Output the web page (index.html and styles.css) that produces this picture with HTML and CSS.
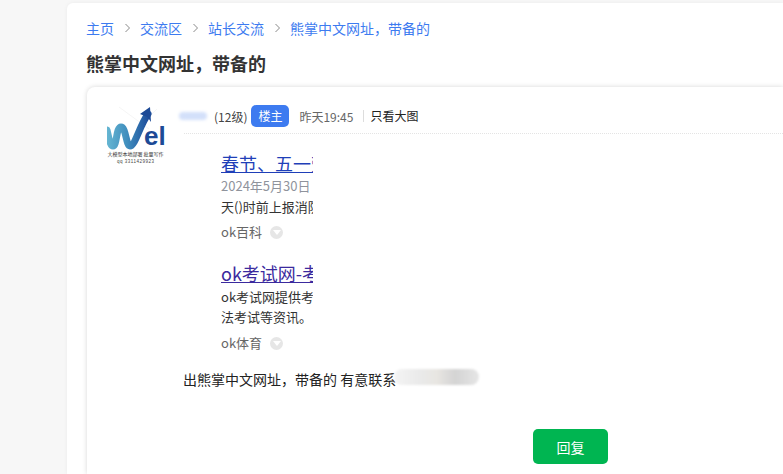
FILE: index.html
```html
<!DOCTYPE html>
<html lang="zh">
<head>
<meta charset="utf-8">
<title>熊掌中文网址，带备的</title>
<link rel="stylesheet" href="styles.css">
</head>
<body>
<main class="panel">
  <nav class="crumbs">
    <a>主页</a><span class="sep"><svg width="7" height="10" viewBox="0 0 7 10"><path d="M1.5 1l4 4-4 4" fill="none" stroke="#8a8a8a" stroke-width="1"/></svg></span>
    <a>交流区</a><span class="sep"><svg width="7" height="10" viewBox="0 0 7 10"><path d="M1.5 1l4 4-4 4" fill="none" stroke="#8a8a8a" stroke-width="1"/></svg></span>
    <a>站长交流</a><span class="sep"><svg width="7" height="10" viewBox="0 0 7 10"><path d="M1.5 1l4 4-4 4" fill="none" stroke="#8a8a8a" stroke-width="1"/></svg></span>
    <a>熊掌中文网址，带备的</a>
  </nav>
  <h1 class="title">熊掌中文网址，带备的</h1>
  <article class="card">
    <div class="avatar">
      <svg width="58" height="60" viewBox="0 0 58 60">
        <defs>
          <linearGradient id="wg" x1="0" y1="0" x2="1" y2="0">
            <stop offset="0" stop-color="#66b6d2"/>
            <stop offset="0.5" stop-color="#3f8dbd"/>
            <stop offset="1" stop-color="#1f4f9c"/>
          </linearGradient>
        </defs>
        <path d="M12 2L42 24M50 4L36 18" stroke="#eeeeee" stroke-width="0.6" fill="none"/>
        <path d="M0 25C2 33 3 41 6 41C10 41 9 22 14 22C19 22 19 41 23 41C28 41 32 22 41 9" fill="none" stroke="url(#wg)" stroke-width="7" stroke-linecap="round"/>
        <path d="M33 9L43 2L44 17L40.500 12Z" fill="#1d4a96"/>
        <text x="37" y="40" class="logo-el">el</text>
        <text x="0.500" y="51" class="logo-zh">大模型本地部署 批量写作</text>
        <text x="10" y="58" class="logo-qq">qq 3311429923</text>
      </svg>
    </div>
    <div class="body">
      <header class="meta">
        <span class="blur-name"></span>
        <span class="level">(12级)</span>
        <span class="badge">楼主</span>
        <span class="time">昨天19:45</span>
        <span class="only">只看大图</span>
      </header>
      <div class="content">
        <section class="snip">
          <a class="snip-title">春节、五一劳</a>
          <p class="snip-date">2024年5月30日</p>
          <p class="snip-text">天()时前上报消防</p>
          <p class="snip-src">ok百科<i class="drop"></i></p>
        </section>
        <section class="snip second">
          <a class="snip-title visited">ok考试网-考</a>
          <p class="snip-text">ok考试网提供考</p>
          <p class="snip-text">法考试等资讯。</p>
          <p class="snip-src">ok体育<i class="drop"></i></p>
        </section>
        <p class="line">出熊掌中文网址，带备的 有意联系<span class="blur-contact"></span></p>
        <div class="actions"><button class="reply">回复</button></div>
      </div>
    </div>
  </article>
</main>
</body>
</html>
```
FILE: styles.css
```css
* { box-sizing: border-box; }
html, body { margin: 0; height: 100%; overflow: hidden; }
body {
  display: flex;
  background: #f7f7f7;
  font-family: "Noto Sans CJK SC", "Liberation Sans", sans-serif;
  color: #333;
  padding: 3px 0 0 67px;
}
.panel {
  display: flex;
  flex-direction: column;
  flex: 1;
  min-width: 0;
  background: #fff;
  padding: 14px 0 0 20px;
  border-radius: 6px 0 0 0;
  box-shadow: 0 0 4px rgba(0,0,0,.05);
}
.crumbs {
  display: flex;
  align-items: center;
  flex: none;
  height: 22px;
  margin-left: -1px;
  font-size: 14px;
  color: #3d7bf0;
}
.sep { display: flex; margin: 0 9px 0 10px; }
.title {
  flex: none;
  margin: 8px 0 0 -1px;
  height: 40px;
  font-size: 18px;
  line-height: 32px;
  font-weight: 700;
  color: #333;
}
.card {
  display: flex;
  flex: 1;
  min-height: 0;
  background: #fff;
  border-radius: 8px 0 0 0;
  box-shadow: 0 0 5px rgba(0,0,0,.16);
  padding: 18px 0 0 20px;
}
.avatar { width: 58px; flex: none; margin-right: 16px; height: 60px; }
.avatar svg { display: block; overflow: hidden; }
.logo-el { font: 700 26px "Liberation Sans", sans-serif; fill: #1d4a96; }
.logo-zh { font: 5px "Noto Sans CJK SC", sans-serif; fill: #333; }
.logo-qq { font: 4.500px "Liberation Sans", sans-serif; fill: #444; letter-spacing: .5px; }
.body { flex: 1; min-width: 0; margin-left: 3px; }
.meta {
  display: flex;
  align-items: center;
  height: 22px;
  font-size: 12px;
}
.blur-name {
  width: 28px;
  height: 8px;
  margin: 0 7px 0 -5px;
  background: #d3e0fa;
  border-radius: 4px;
  filter: blur(1.5px);
}
.level { color: #444; }
.badge {
  width: 38px;
  height: 22px;
  margin-left: 4px;
  line-height: 22px;
  text-align: center;
  color: #fff;
  background: #3d7bf0;
  border-radius: 5px;
}
.time { margin-left: 10px; color: #666; }
.only {
  margin-left: 10px;
  padding-left: 6px;
  line-height: 12px;
  border-left: 1px solid #ddd;
  color: #222;
}
.content {
  border-top: 1px dotted #e4e4e4;
  margin-top: 6px;
  padding-top: 18px;
}
.snip {
  width: 92px;
  margin-left: 37px;
  overflow: hidden;
  white-space: nowrap;
}
.second { margin-top: 19px; }
.snip-title {
  display: block;
  height: 24px;
  font-size: 18px;
  line-height: 22px;
  color: #1f3fb8;
  text-decoration: underline;
}
.visited { color: #3b2a9e; height: 26px; line-height: 24px; }
.snip-date, .snip-text, .snip-src { margin: 0; font-size: 13px; line-height: 20px; }
.snip-date { color: #8f939c; height: 21px; }
.snip-text { color: #333; height: 20px; }
.snip-src {
  display: flex;
  align-items: center;
  color: #666;
  margin-top: 5px;
  height: 20px;
}
.second .snip-src { margin-top: 6px; }
.drop {
  position: relative;
  width: 13px;
  height: 13px;
  margin-left: 8px;
  border-radius: 50%;
  background: #e6e6e6;
}
.drop::after {
  content: "";
  position: absolute;
  left: 2.500px;
  top: 4.500px;
  border: 4px solid transparent;
  border-top: 5px solid #fff;
  border-bottom: 0;
}
.line {
  display: flex;
  align-items: center;
  margin: 15px 0 0 -1px;
  height: 22px;
  font-size: 14px;
  color: #222;
  white-space: nowrap;
}
.blur-contact {
  width: 85px;
  height: 16px;
  margin: -4px 0 0 -2px;
  border-radius: 8px;
  background: linear-gradient(90deg, #f4f4f4, #eaeaea 30%, #e8e6e2 50%, #d4d4d4 72%, #e6e6e6);
  filter: blur(1px);
}
.actions { margin: 39px 0 0 349px; }
.reply {
  display: block;
  width: 75px;
  height: 35px;
  border: 0;
  border-radius: 5px;
  background: #00b551;
  color: #fff;
  font: 14px "Noto Sans CJK SC", sans-serif;
}
```
